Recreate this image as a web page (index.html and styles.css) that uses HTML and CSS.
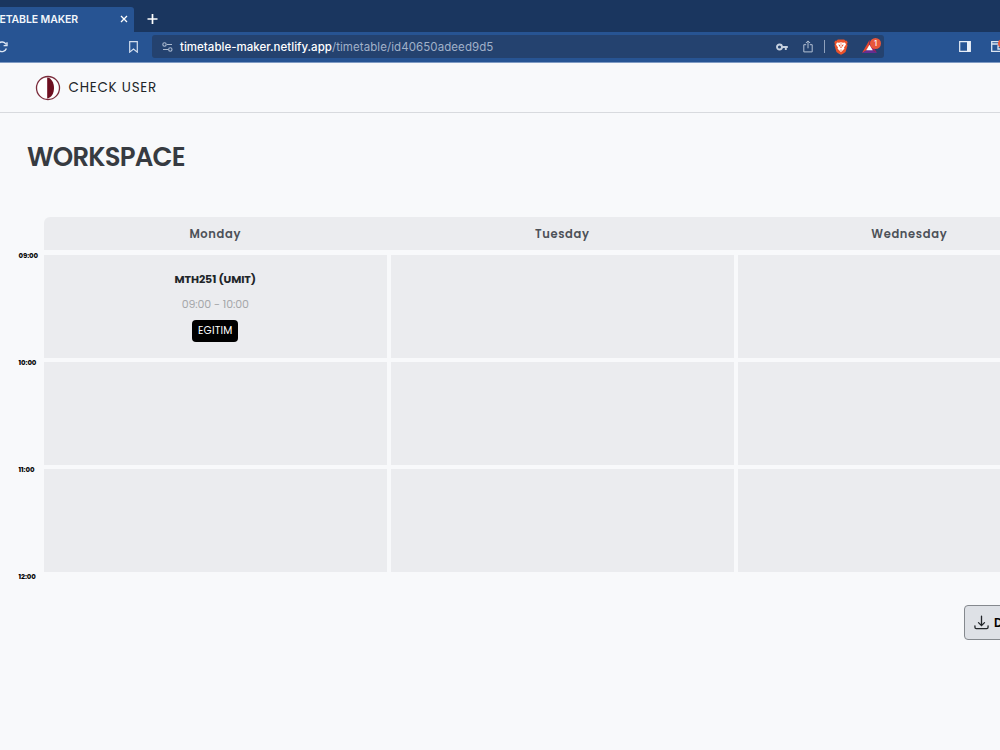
FILE: index.html
```html
<!DOCTYPE html>
<html lang="en">
<head>
    <meta charset="UTF-8">
    <meta name="viewport" content="width=device-width, initial-scale=1.0">
    <title>Timetable Maker</title>
    <link rel="stylesheet" href="styles.css">
</head>
<body>
    <div class="tabs">
        <div class="tab">
            <span class="tab-title">TIMETABLE MAKER</span>
            <svg class="tab-close" viewBox="0 0 8 8"><path d="M1 1l6 6M7 1l-6 6"/></svg>
        </div>
        <svg class="tab-new" viewBox="0 0 11 11"><path d="M5.5 0.5v10M0.5 5.5h10"/></svg>
    </div>

    <div class="toolbar">
        <svg class="reload" viewBox="0 0 12 12"><path d="M10.4 7.5A4.8 4.8 0 1 1 10 3.3M11 1.2v3.4H7.6"/></svg>
        <svg class="bookmark" viewBox="0 0 9 12"><path d="M.7.7h7.6v10.4L4.5 8 .7 11.1z"/></svg>
        <div class="address">
            <svg class="site" viewBox="0 0 11 10"><circle cx="2.5" cy="2.5" r="1.7"/><path d="M5 2.5h5M1 7.5h5"/><circle cx="8.3" cy="7.5" r="1.7"/></svg>
            <p class="url"><b>timetable-maker.netlify.app</b>/timetable/id40650adeed9d5</p>
            <svg class="key" viewBox="0 0 12 8"><circle cx="3.5" cy="4" r="2.5"/><path d="M6 4h5.8M9.8 4v3"/></svg>
            <svg class="share" viewBox="0 0 10 13"><path d="M3.2 4.7H.8v7.2h8.4V4.7H6.8M5 8.3V1M2.8 3.1L5 .9l2.2 2.2"/></svg>
            <span class="divider"></span>
            <svg class="brave" viewBox="0 0 14 16">
                <path fill="#e9522b" d="M3.8.5h6.4l1.2 1.3 1.5-.1.8 2-.7 1.4.5 1.5-1.8 5.9c-.3 1-1.5 1.6-4.7 3.2-3.2-1.6-4.4-2.2-4.7-3.2L.5 6.6 1 5.1.3 3.7l.8-2 1.5.1z"/>
                <path fill="#fff" d="M3 3.5l2 .3 2-.5 2 .5 2-.3 1 2.1-2 2.9.4 1.2L7 13 3.6 9.7 4 8.5 2 5.6z"/>
                <path fill="#e9522b" d="M4.2 5.4l2 .5-.2 1.4 1 .6 1-.6-.2-1.4 2-.5-1.2 1.9L7 9.3 5.4 7.3zM6.7 4h.6v2.5h-.6zM6 11l1-.6 1 .6-1 .8z"/>
            </svg>
            <div class="rewards">
                <svg viewBox="0 0 15 13">
                    <path fill="#e8472d" d="M7.5 0L0 13l7.5-4.5z"/>
                    <path fill="#9e1f63" d="M7.5 0L15 13 7.5 8.5z"/>
                    <path fill="#662d91" d="M0 13l7.5-4.5L15 13z"/>
                    <path fill="#fff" d="M7.5 4.8l3.3 5.4H4.2z"/>
                </svg>
                <span class="count">1</span>
            </div>
        </div>
        <svg class="sidebar" viewBox="0 0 12 11"><path d="M.7.7h10.6v9.6H.7z"/><path class="solid" d="M8 .5h3.5v10H8z"/></svg>
        <div class="wallet">
            <svg viewBox="0 0 12 11"><path d="M11 3V.7H.7v9.6H11V8M.7 3h11v5H7V5h5"/></svg>
            <span class="alert"></span>
        </div>
    </div>

    <header>
        <svg class="logo" viewBox="0 0 26 26">
            <circle cx="13" cy="13" r="11.5" fill="#fff" stroke="#7a2b3b" stroke-width="1.3"/>
            <path fill="#6d0f20" d="M12.2 2.6C16.5 3 19 8 19 13s-2.5 10-6.8 10.4z"/>
        </svg>
        <span class="brand">CHECK USER</span>
    </header>

    <main>
        <h1>WORKSPACE</h1>

        <div class="schedule">
            <div class="hours">
                <span class="hour">09:00</span>
                <span class="hour">10:00</span>
                <span class="hour">11:00</span>
                <span class="hour">12:00</span>
            </div>
            <div class="timetable">
                <div class="days">
                    <span class="day">Monday</span>
                    <span class="day">Tuesday</span>
                    <span class="day">Wednesday</span>
                </div>
                <div class="cells">
                    <div class="cell">
                        <p class="course">MTH251 (UMIT)</p>
                        <p class="time">09:00 - 10:00</p>
                        <span class="room">EGITIM</span>
                    </div>
                    <div class="cell"></div>
                    <div class="cell"></div>
                    <div class="cell"></div>
                    <div class="cell"></div>
                    <div class="cell"></div>
                    <div class="cell"></div>
                    <div class="cell"></div>
                    <div class="cell"></div>
                </div>
            </div>
        </div>

        <button class="download">
            <svg viewBox="0 0 16 16"><path d="M1 11.5v1.6c0 .9.5 1.4 1.4 1.4h11.2c.9 0 1.4-.5 1.4-1.4v-1.6M8 1.2v10M4.8 8.1L8 11.3l3.2-3.2"/></svg>
            <span>Download</span>
        </button>
    </main>
</body>
</html>
```

FILE: styles.css
```css
* {
    box-sizing: border-box;
}

body {
    margin: 0;
    height: 750px;
    overflow: hidden;
    font-family: 'Poppins', 'Inter', sans-serif;
    background-color: #f8f9fb;
    color: #212529;
}

p, h1 {
    margin: 0;
}

svg {
    display: block;
    flex: none;
    fill: none;
}

/* browser window */
.tabs {
    display: flex;
    height: 32px;
    padding-top: 7px;
    background-color: #1a365f;
}

.tab {
    display: flex;
    justify-content: flex-end;
    align-items: center;
    width: 134px;
    height: 25px;
    padding: 0 6px 1px 0;
    border-top-right-radius: 3px;
    background-color: #275493;
    overflow: hidden;
}

.tab-title {
    font: 600 10.5px 'Inter', sans-serif;
    letter-spacing: -0.1px;
    color: #f2f6fb;
    white-space: nowrap;
}

.tab-close {
    width: 8px;
    margin-left: 42px;
    stroke: #fff;
    stroke-width: 1.3;
}

.tab-new {
    width: 11px;
    margin: 0 0 1px 13px;
    stroke: #fff;
    stroke-width: 1.7;
}

.toolbar {
    display: flex;
    align-items: center;
    height: 31px;
    padding-bottom: 1px;
    background-color: #275493;
    border-bottom: 1px solid #7f9bc4;
}

.reload {
    width: 12px;
    margin-left: -4px;
    stroke: #dbe5f3;
    stroke-width: 1.4;
}

.bookmark {
    width: 9px;
    margin-left: 121px;
    stroke: #d3deee;
    stroke-width: 1.2;
}

.address {
    display: flex;
    flex: none;
    align-items: center;
    width: 732px;
    height: 23px;
    margin-left: 14px;
    padding: 0 3px 0 10px;
    border-radius: 3px;
    background-color: #24426f;
}

.site {
    width: 11px;
    stroke: #a9b9d0;
    stroke-width: 1.1;
}

.url {
    flex: 1;
    margin-left: 7px;
    font: 400 11.5px 'Inter', sans-serif;
    letter-spacing: 0.08px;
    color: #a1b1c9;
    white-space: nowrap;
}

.url b {
    font-weight: 500;
    letter-spacing: 0.02px;
    color: #fff;
}

.key {
    width: 12px;
    stroke: #c6d1e0;
    stroke-width: 1.9;
}

.share {
    width: 10px;
    margin-left: 15px;
    stroke: #b4c1d4;
    stroke-width: 1;
}

.divider {
    width: 1px;
    height: 13px;
    margin-left: 11px;
    background-color: #8fa1bc;
}

.brave {
    width: 14px;
    margin-left: 9px;
}

.rewards {
    position: relative;
    margin-left: 14px;
}

.rewards svg {
    width: 15px;
    margin-right: 4px;
}

.count {
    position: absolute;
    top: -2px;
    right: 0;
    width: 11px;
    height: 11px;
    border-radius: 50%;
    background-color: #e8573b;
    color: #fff;
    font: 500 7.5px/11px 'Inter', sans-serif;
    text-align: center;
}

.sidebar {
    width: 12px;
    margin-left: 75px;
    stroke: #e8eef7;
    stroke-width: 1.2;
}

.sidebar .solid {
    fill: #e8eef7;
    stroke: none;
}

.wallet {
    position: relative;
    margin-left: 20px;
}

.wallet svg {
    width: 12px;
    stroke: #dce5f1;
    stroke-width: 1.3;
}

.alert {
    position: absolute;
    top: -2px;
    left: 7px;
    width: 9px;
    height: 9px;
    border-radius: 50%;
    background-color: #e8573b;
}

/* page */
header {
    display: flex;
    align-items: center;
    height: 50px;
    padding-left: 35px;
    border-bottom: 1px solid #d8dade;
}

.logo {
    width: 26px;
}

.brand {
    margin-left: 7.5px;
    font-size: 13.5px;
    letter-spacing: 0.75px;
}

h1 {
    padding: 28px 0 0 27px;
    font-size: 26px;
    font-weight: 600;
    line-height: 32px;
    letter-spacing: -0.8px;
    color: #373b41;
}

.schedule {
    display: flex;
    margin-top: 44px;
}

.hours {
    flex: none;
    width: 43.5px;
    padding: 33px 0 0 18.5px;
}

.hour {
    display: block;
    height: 107px;
    font-size: 7px;
    font-weight: 700;
    line-height: 11px;
    letter-spacing: -0.1px;
    color: #000;
}

.hour:last-child {
    height: 11px;
}

.days, .cells {
    display: grid;
    grid-template-columns: repeat(3, 343.5px);
    column-gap: 3.5px;
}

.days {
    width: 1037.5px;
    height: 33px;
    border-top-left-radius: 6px;
    background-color: #ebecef;
}

.day {
    font-size: 11.5px;
    font-weight: 600;
    line-height: 34px;
    letter-spacing: 0.65px;
    text-align: center;
    color: #4d5158;
}

.cells {
    grid-auto-rows: 103.5px;
    row-gap: 3.5px;
    margin-top: 4.5px;
}

.cell {
    display: flex;
    flex-direction: column;
    align-items: center;
    background-color: #ebecef;
}

.course {
    padding-top: 16px;
    font-size: 11px;
    font-weight: 700;
    line-height: 17px;
    letter-spacing: -0.1px;
}

.time {
    margin-top: 8px;
    font-size: 11px;
    line-height: 16px;
    letter-spacing: -0.1px;
    color: #a5a7aa;
}

.room {
    height: 22px;
    margin-top: 8px;
    padding: 0 5.5px;
    border-radius: 4px;
    background-color: #000;
    color: #fff;
    font-size: 10.5px;
    line-height: 22px;
    letter-spacing: 0.2px;
}

.download {
    display: flex;
    align-items: center;
    gap: 5px;
    width: 110px;
    height: 35px;
    margin: 23px 0 0 964px;
    padding: 0 9px;
    border: 1px solid #85898e;
    border-radius: 4px;
    background-color: #dee1e6;
    color: #000;
    font: 600 12px 'Poppins', 'Inter', sans-serif;
}

.download svg {
    width: 15px;
    stroke: #212529;
    stroke-width: 1.4;
    stroke-linecap: round;
}
```
